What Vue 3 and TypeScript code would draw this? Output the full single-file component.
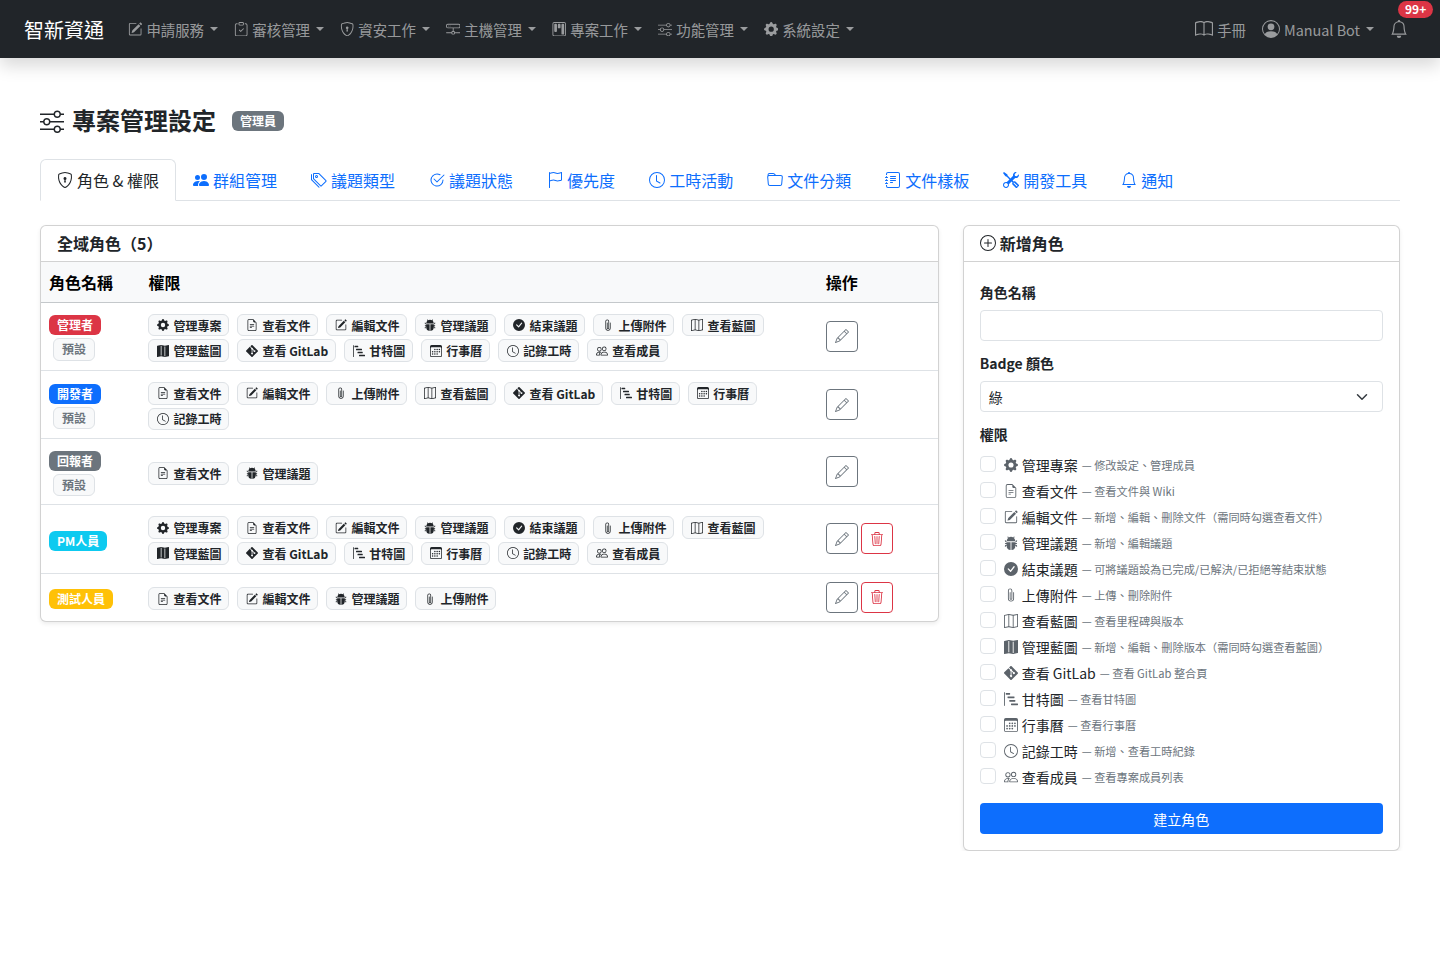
<script setup lang="ts">
import { h } from 'vue';

const paths: Record<string, string[]> = {
  pencilSquare: ['M15.502 1.94a.5.5 0 0 1 0 .706L14.459 3.69l-2-2L13.502.646a.5.5 0 0 1 .707 0l1.293 1.293zm-1.75 2.456-2-2L4.939 9.21a.5.5 0 0 0-.121.196l-.805 2.414a.25.25 0 0 0 .316.316l2.414-.805a.5.5 0 0 0 .196-.12l6.813-6.814z', 'M1 13.5A1.5 1.5 0 0 0 2.5 15h11a1.5 1.5 0 0 0 1.5-1.5v-6a.5.5 0 0 0-1 0v6a.5.5 0 0 1-.5.5h-11a.5.5 0 0 1-.5-.5v-11a.5.5 0 0 1 .5-.5H9a.5.5 0 0 0 0-1H2.5A1.5 1.5 0 0 0 1 2.5v11z'],
  clipboardCheck: ['M10.854 7.146a.5.5 0 0 1 0 .708l-3 3a.5.5 0 0 1-.708 0l-1.5-1.5a.5.5 0 1 1 .708-.708L7.5 9.793l2.646-2.647a.5.5 0 0 1 .708 0z', 'M4 1.5H3a2 2 0 0 0-2 2V14a2 2 0 0 0 2 2h10a2 2 0 0 0 2-2V3.5a2 2 0 0 0-2-2h-1v1h1a1 1 0 0 1 1 1V14a1 1 0 0 1-1 1H3a1 1 0 0 1-1-1V3.5a1 1 0 0 1 1-1h1v-1z', 'M9.5 1a.5.5 0 0 1 .5.5v1a.5.5 0 0 1-.5.5h-3a.5.5 0 0 1-.5-.5v-1a.5.5 0 0 1 .5-.5h3zm-3-1A1.5 1.5 0 0 0 5 1.5v1A1.5 1.5 0 0 0 6.5 4h3A1.5 1.5 0 0 0 11 2.5v-1A1.5 1.5 0 0 0 9.5 0h-3z'],
  shieldLock: ['M5.338 1.59a61.44 61.44 0 0 0-2.837.856.481.481 0 0 0-.328.39c-.554 4.157.726 7.19 2.253 9.188a10.725 10.725 0 0 0 2.287 2.233c.346.244.652.42.893.533.12.057.218.095.293.118a.55.55 0 0 0 .101.025.615.615 0 0 0 .1-.025c.076-.023.174-.061.294-.118.24-.113.547-.29.893-.533a10.726 10.726 0 0 0 2.287-2.233c1.527-1.997 2.807-5.031 2.253-9.188a.48.48 0 0 0-.328-.39c-.651-.213-1.75-.56-2.837-.855C9.552 1.29 8.531 1.067 8 1.067c-.53 0-1.552.223-2.662.524zM5.072.56C6.157.265 7.31 0 8 0s1.843.265 2.928.56c1.11.3 2.229.655 2.887.87a1.54 1.54 0 0 1 1.044 1.262c.596 4.477-.787 7.795-2.465 9.99a11.775 11.775 0 0 1-2.517 2.453 7.159 7.159 0 0 1-1.048.625c-.28.132-.581.24-.829.24s-.548-.108-.829-.24a7.158 7.158 0 0 1-1.048-.625 11.777 11.777 0 0 1-2.517-2.453C1.928 10.487.545 7.169 1.141 2.692A1.54 1.54 0 0 1 2.185 1.43 62.456 62.456 0 0 1 5.072.56z', 'M9.5 6.5a1.5 1.5 0 0 1-1 1.415l.385 1.99a.5.5 0 0 1-.491.595h-.788a.5.5 0 0 1-.49-.595l.384-1.99a1.5 1.5 0 1 1 2-1.415z'],
  hddNetwork: ['M4.5 5a.5.5 0 1 0 0-1 .5.5 0 0 0 0 1zM3 4.5a.5.5 0 1 1-1 0 .5.5 0 0 1 1 0z', 'M0 4a2 2 0 0 1 2-2h12a2 2 0 0 1 2 2v1a2 2 0 0 1-2 2H8.5v3a1.5 1.5 0 0 1 1.5 1.5h5.5a.5.5 0 0 1 0 1H10A1.5 1.5 0 0 1 8.5 14h-1A1.5 1.5 0 0 1 6 12.5H.5a.5.5 0 0 1 0-1H6A1.5 1.5 0 0 1 7.5 10V7H2a2 2 0 0 1-2-2V4zm1 0v1a1 1 0 0 0 1 1h12a1 1 0 0 0 1-1V4a1 1 0 0 0-1-1H2a1 1 0 0 0-1 1zm6 7.5v1a.5.5 0 0 0 .5.5h1a.5.5 0 0 0 .5-.5v-1a.5.5 0 0 0-.5-.5h-1a.5.5 0 0 0-.5.5z'],
  kanban: ['M13.5 1a1 1 0 0 1 1 1v12a1 1 0 0 1-1 1h-11a1 1 0 0 1-1-1V2a1 1 0 0 1 1-1h11zm-11-1a2 2 0 0 0-2 2v12a2 2 0 0 0 2 2h11a2 2 0 0 0 2-2V2a2 2 0 0 0-2-2h-11z', 'M6.5 3a1 1 0 0 1 1-1h1a1 1 0 0 1 1 1v3a1 1 0 0 1-1 1h-1a1 1 0 0 1-1-1V3zm-4 0a1 1 0 0 1 1-1h1a1 1 0 0 1 1 1v7a1 1 0 0 1-1 1h-1a1 1 0 0 1-1-1V3zm8 0a1 1 0 0 1 1-1h1a1 1 0 0 1 1 1v10a1 1 0 0 1-1 1h-1a1 1 0 0 1-1-1V3z'],
  sliders: ['M11.5 2a1.5 1.5 0 1 0 0 3 1.5 1.5 0 0 0 0-3zM9.05 3a2.5 2.5 0 0 1 4.9 0H16v1h-2.05a2.5 2.5 0 0 1-4.9 0H0V3h9.05zM4.5 7a1.5 1.5 0 1 0 0 3 1.5 1.5 0 0 0 0-3zM2.05 8a2.5 2.5 0 0 1 4.9 0H16v1H6.95a2.5 2.5 0 0 1-4.9 0H0V8h2.05zm9.45 4a1.5 1.5 0 1 0 0 3 1.5 1.5 0 0 0 0-3zm-2.45 1a2.5 2.5 0 0 1 4.9 0H16v1h-2.05a2.5 2.5 0 0 1-4.9 0H0v-1h9.05z'],
  gearFill: ['M9.405 1.05c-.413-1.4-2.397-1.4-2.81 0l-.1.34a1.464 1.464 0 0 1-2.105.872l-.31-.17c-1.283-.698-2.686.705-1.987 1.987l.169.311c.446.82.023 1.841-.872 2.105l-.34.1c-1.4.413-1.4 2.397 0 2.81l.34.1a1.464 1.464 0 0 1 .872 2.105l-.17.31c-.698 1.283.705 2.686 1.987 1.987l.311-.169a1.464 1.464 0 0 1 2.105.872l.1.34c.413 1.4 2.397 1.4 2.81 0l.1-.34a1.464 1.464 0 0 1 2.105-.872l.31.17c1.283.698 2.686-.705 1.987-1.987l-.169-.311a1.464 1.464 0 0 1 .872-2.105l.34-.1c1.4-.413 1.4-2.397 0-2.81l-.34-.1a1.464 1.464 0 0 1-.872-2.105l.17-.31c.698-1.283-.705-2.686-1.987-1.987l-.311.169a1.464 1.464 0 0 1-2.105-.872l-.1-.34zM8 10.93a2.929 2.929 0 1 1 0-5.86 2.929 2.929 0 0 1 0 5.858z'],
  book: ['M1 2.828c.885-.37 2.154-.769 3.388-.893 1.33-.134 2.458.063 3.112.752v9.746c-.935-.53-2.12-.603-3.213-.493-1.18.12-2.37.461-3.287.811V2.828zm7.5-.141c.654-.689 1.782-.886 3.112-.752 1.234.124 2.503.523 3.388.893v9.923c-.918-.35-2.107-.692-3.287-.81-1.094-.111-2.278-.039-3.213.492V2.687zM8 1.783C7.015.936 5.587.81 4.287.94c-1.514.153-3.042.672-3.994 1.105A.5.5 0 0 0 0 2.5v11a.5.5 0 0 0 .707.455c.882-.4 2.303-.881 3.68-1.02 1.409-.142 2.59.087 3.223.877a.5.5 0 0 0 .78 0c.633-.79 1.814-1.019 3.222-.877 1.378.139 2.8.62 3.681 1.02A.5.5 0 0 0 16 13.5v-11a.5.5 0 0 0-.293-.455c-.952-.433-2.48-.952-3.994-1.105C10.413.809 8.985.936 8 1.783z'],
  personCircle: ['M11 6a3 3 0 1 1-6 0 3 3 0 0 1 6 0z', 'M0 8a8 8 0 1 1 16 0A8 8 0 0 1 0 8zm8-7a7 7 0 0 0-5.468 11.37C3.242 11.226 4.805 10 8 10s4.757 1.225 5.468 2.37A7 7 0 0 0 8 1z'],
  bell: ['M8 16a2 2 0 0 0 2-2H6a2 2 0 0 0 2 2zM8 1.918l-.797.161A4.002 4.002 0 0 0 4 6c0 .628-.134 2.197-.459 3.742-.16.767-.376 1.566-.663 2.258h10.244c-.287-.692-.502-1.49-.663-2.258C12.134 8.197 12 6.628 12 6a4.002 4.002 0 0 0-3.203-3.92L8 1.917zM14.22 12c.223.447.481.801.78 1H1c.299-.199.557-.553.78-1C2.68 10.2 3 6.88 3 6c0-2.42 1.72-4.44 4.005-4.901a1 1 0 1 1 1.99 0A5.002 5.002 0 0 1 13 6c0 .88.32 4.2 1.22 6z'],
  peopleFill: ['M7 14s-1 0-1-1 1-4 5-4 5 3 5 4-1 1-1 1H7Zm4-6a3 3 0 1 0 0-6 3 3 0 0 0 0 6Zm-5.784 6A2.238 2.238 0 0 1 5 13c0-1.355.68-2.75 1.936-3.72A6.325 6.325 0 0 0 5 9c-4 0-5 3-5 4s1 1 1 1h4.216ZM4.5 8a2.5 2.5 0 1 0 0-5 2.5 2.5 0 0 0 0 5Z'],
  tags: ['M3 2v4.586l7 7L14.586 9l-7-7H3zM2 2a1 1 0 0 1 1-1h4.586a1 1 0 0 1 .707.293l7 7a1 1 0 0 1 0 1.414l-4.586 4.586a1 1 0 0 1-1.414 0l-7-7A1 1 0 0 1 2 6.586V2z', 'M5.5 5a.5.5 0 1 1 0-1 .5.5 0 0 1 0 1zm0 1a1.5 1.5 0 1 0 0-3 1.5 1.5 0 0 0 0 3zM1 7.086a1 1 0 0 0 .293.707L8.75 15.25l-.043.043a1 1 0 0 1-1.414 0l-7-7A1 1 0 0 1 0 7.586V3a1 1 0 0 1 1-1v5.086z'],
  check2Circle: ['M2.5 8a5.5 5.5 0 0 1 8.25-4.764.5.5 0 0 0 .5-.866A6.5 6.5 0 1 0 14.5 8a.5.5 0 0 0-1 0 5.5 5.5 0 1 1-11 0z', 'M15.354 3.354a.5.5 0 0 0-.708-.708L8 9.293 5.354 6.646a.5.5 0 1 0-.708.708l3 3a.5.5 0 0 0 .708 0l7-7z'],
  flag: ['M14.778.085A.5.5 0 0 1 15 .5V8a.5.5 0 0 1-.314.464L14.5 8l.186.464-.003.001-.006.003-.023.009a12.435 12.435 0 0 1-.397.15c-.264.095-.631.223-1.047.35-.816.252-1.879.523-2.71.523-.847 0-1.548-.28-2.158-.525l-.028-.01C7.68 8.71 7.14 8.5 6.5 8.5c-.7 0-1.638.23-2.437.477A19.626 19.626 0 0 0 3 9.342V15.5a.5.5 0 0 1-1 0V.5a.5.5 0 0 1 1 0v.282c.226-.079.496-.17.79-.26C4.606.272 5.67 0 6.5 0c.84 0 1.524.277 2.121.519l.043.018C9.286.788 9.828 1 10.5 1c.7 0 1.638-.23 2.437-.477a19.587 19.587 0 0 0 1.349-.476l.019-.007.004-.002h.001M14 1.221c-.22.078-.48.167-.766.255-.81.252-1.872.523-2.734.523-.886 0-1.592-.286-2.203-.534l-.008-.003C7.662 1.21 7.139 1 6.5 1c-.669 0-1.606.229-2.415.478A21.294 21.294 0 0 0 3 1.845v6.433c.22-.078.48-.167.766-.255C4.576 7.77 5.638 7.5 6.5 7.5c.847 0 1.548.28 2.158.525l.028.01C9.32 8.29 9.86 8.5 10.5 8.5c.668 0 1.606-.229 2.415-.478A21.317 21.317 0 0 0 14 7.655V1.222z'],
  clock: ['M8 3.5a.5.5 0 0 0-1 0V9a.5.5 0 0 0 .252.434l3.5 2a.5.5 0 0 0 .496-.868L8 8.71V3.5z', 'M8 16A8 8 0 1 0 8 0a8 8 0 0 0 0 16zm7-8A7 7 0 1 1 1 8a7 7 0 0 1 14 0z'],
  folder: ['M.54 3.87.5 3a2 2 0 0 1 2-2h3.672a2 2 0 0 1 1.414.586l.828.828A2 2 0 0 0 9.828 3h3.982a2 2 0 0 1 1.992 2.181l-.637 7A2 2 0 0 1 13.174 14H2.826a2 2 0 0 1-1.991-1.819l-.637-7a1.99 1.99 0 0 1 .342-1.31zM2.19 4a1 1 0 0 0-.996 1.09l.637 7a1 1 0 0 0 .995.91h10.348a1 1 0 0 0 .995-.91l.637-7A1 1 0 0 0 13.81 4H2.19zm4.69-1.707A1 1 0 0 0 6.172 2H2.5a1 1 0 0 0-1 .981l.006.139C1.72 3.042 1.95 3 2.19 3h5.396l-.707-.707z'],
  journalText: ['M5 10.5a.5.5 0 0 1 .5-.5h2a.5.5 0 0 1 0 1h-2a.5.5 0 0 1-.5-.5zm0-2a.5.5 0 0 1 .5-.5h5a.5.5 0 0 1 0 1h-5a.5.5 0 0 1-.5-.5zm0-2a.5.5 0 0 1 .5-.5h5a.5.5 0 0 1 0 1h-5a.5.5 0 0 1-.5-.5zm0-2a.5.5 0 0 1 .5-.5h5a.5.5 0 0 1 0 1h-5a.5.5 0 0 1-.5-.5z', 'M3 0h10a2 2 0 0 1 2 2v12a2 2 0 0 1-2 2H3a2 2 0 0 1-2-2v-1h1v1a1 1 0 0 0 1 1h10a1 1 0 0 0 1-1V2a1 1 0 0 0-1-1H3a1 1 0 0 0-1 1v1H1V2a2 2 0 0 1 2-2z', 'M1 5v-.5a.5.5 0 0 1 1 0V5h.5a.5.5 0 0 1 0 1h-2a.5.5 0 0 1 0-1H1zm0 3v-.5a.5.5 0 0 1 1 0V8h.5a.5.5 0 0 1 0 1h-2a.5.5 0 0 1 0-1H1zm0 3v-.5a.5.5 0 0 1 1 0v.5h.5a.5.5 0 0 1 0 1h-2a.5.5 0 0 1 0-1H1z'],
  tools: ['M1 0 0 1l2.2 3.081a1 1 0 0 0 .815.419h.07a1 1 0 0 1 .708.293l2.675 2.675-2.617 2.654A3.003 3.003 0 0 0 0 13a3 3 0 1 0 5.878-.851l2.654-2.617.968.968-.305.914a1 1 0 0 0 .242 1.023l3.27 3.27a.997.997 0 0 0 1.414 0l1.586-1.586a.997.997 0 0 0 0-1.414l-3.27-3.27a1 1 0 0 0-1.023-.242L10.5 9.5l-.96-.96 2.68-2.643A3.005 3.005 0 0 0 16 3c0-.269-.035-.53-.102-.777l-2.14 2.141L12 4l-.364-1.757L13.777.102a3 3 0 0 0-3.675 3.68L7.462 6.46 4.793 3.793a1 1 0 0 1-.293-.707v-.071a1 1 0 0 0-.419-.814L1 0Zm9.646 10.646a.5.5 0 0 1 .708 0l2.914 2.915a.5.5 0 0 1-.707.707l-2.915-2.914a.5.5 0 0 1 0-.708ZM3 11l.471.242.529.026.287.445.445.287.026.529L5 13l-.242.471-.026.529-.445.287-.287.445-.529.026L3 15l-.471-.242L2 14.732l-.287-.445L1.268 14l-.026-.529L1 13l.242-.471.026-.529.445-.287.287-.445.529-.026L3 11Z'],
  plusCircle: ['M8 15A7 7 0 1 1 8 1a7 7 0 0 1 0 14zm0 1A8 8 0 1 0 8 0a8 8 0 0 0 0 16z', 'M8 4a.5.5 0 0 1 .5.5v3h3a.5.5 0 0 1 0 1h-3v3a.5.5 0 0 1-1 0v-3h-3a.5.5 0 0 1 0-1h3v-3A.5.5 0 0 1 8 4z'],
  fileText: ['M5.5 7a.5.5 0 0 0 0 1h5a.5.5 0 0 0 0-1h-5zM5 9.5a.5.5 0 0 1 .5-.5h5a.5.5 0 0 1 0 1h-5a.5.5 0 0 1-.5-.5zm0 2a.5.5 0 0 1 .5-.5h2a.5.5 0 0 1 0 1h-2a.5.5 0 0 1-.5-.5z', 'M9.5 0H4a2 2 0 0 0-2 2v12a2 2 0 0 0 2 2h8a2 2 0 0 0 2-2V4.5L9.5 0zm0 1v2A1.5 1.5 0 0 0 11 4.5h2V14a1 1 0 0 1-1 1H4a1 1 0 0 1-1-1V2a1 1 0 0 1 1-1h5.5z'],
  bugFill: ['M4.978.855a.5.5 0 1 0-.956.29l.41 1.352A4.985 4.985 0 0 0 3 6h10a4.985 4.985 0 0 0-1.432-3.503l.41-1.352a.5.5 0 1 0-.956-.29l-.291.956A4.978 4.978 0 0 0 8 1a4.979 4.979 0 0 0-2.731.811l-.29-.956z', 'M13 6v1H8.5v8.975A5 5 0 0 0 13 11h.5a.5.5 0 0 1 .5.5v.5a.5.5 0 1 0 1 0v-.5a1.5 1.5 0 0 0-1.5-1.5H13V9h1.5a.5.5 0 0 0 0-1H13V7h.5A1.5 1.5 0 0 0 15 5.5V5a.5.5 0 0 0-1 0v.5a.5.5 0 0 1-.5.5H13zm-5.5 9.975V7H3V6h-.5a.5.5 0 0 1-.5-.5V5a.5.5 0 0 0-1 0v.5A1.5 1.5 0 0 0 2.5 7H3v1H1.5a.5.5 0 0 0 0 1H3v1h-.5A1.5 1.5 0 0 0 1 11.5v.5a.5.5 0 1 0 1 0v-.5a.5.5 0 0 1 .5-.5H3a5 5 0 0 0 4.5 4.975z'],
  checkCircleFill: ['M16 8A8 8 0 1 1 0 8a8 8 0 0 1 16 0zm-3.97-3.03a.75.75 0 0 0-1.08.022L7.477 9.417 5.384 7.323a.75.75 0 0 0-1.06 1.06L6.97 11.03a.75.75 0 0 0 1.079-.02l3.992-4.99a.75.75 0 0 0-.01-1.05z'],
  paperclip: ['M4.5 3a2.5 2.5 0 0 1 5 0v9a1.5 1.5 0 0 1-3 0V5a.5.5 0 0 1 1 0v7a.5.5 0 0 0 1 0V3a1.5 1.5 0 1 0-3 0v9a2.5 2.5 0 0 0 5 0V5a.5.5 0 0 1 1 0v7a3.5 3.5 0 1 1-7 0V3z'],
  map: ['M15.817.113A.5.5 0 0 1 16 .5v14a.5.5 0 0 1-.402.49l-5 1a.502.502 0 0 1-.196 0L5.5 15.01l-4.902.98A.5.5 0 0 1 0 15.5v-14a.5.5 0 0 1 .402-.49l5-1a.5.5 0 0 1 .196 0L10.5.99l4.902-.98a.5.5 0 0 1 .415.103zM10 1.91l-4-.8v12.98l4 .8V1.91zm1 12.98 4-.8V1.11l-4 .8v12.98zm-6-.8V1.11l-4 .8v12.98l4-.8z'],
  mapFill: ['M16 .5a.5.5 0 0 0-.598-.49L10.5.99 5.598.01a.5.5 0 0 0-.196 0l-5 1A.5.5 0 0 0 0 1.5v14a.5.5 0 0 0 .598.49l4.902-.98 4.902.98a.502.502 0 0 0 .196 0l5-1A.5.5 0 0 0 16 14.5V.5zM5 14.09V1.11l.5-.1.5.1v12.98l-.402-.08a.498.498 0 0 0-.196 0L5 14.09zm5 .8V1.91l.402.08a.5.5 0 0 0 .196 0L11 1.91v12.98l-.5.1-.5-.1z'],
  git: ['M15.698 7.287 8.712.302a1.03 1.03 0 0 0-1.457 0l-1.45 1.45 1.84 1.84a1.223 1.223 0 0 1 1.55 1.56l1.773 1.774a1.224 1.224 0 0 1 1.267 2.025 1.226 1.226 0 0 1-2.002-1.334L8.58 5.963v4.353a1.226 1.226 0 1 1-1.008-.036V5.887a1.226 1.226 0 0 1-.666-1.608L5.093 2.465l-4.79 4.79a1.03 1.03 0 0 0 0 1.457l6.986 6.986a1.03 1.03 0 0 0 1.457 0l6.953-6.953a1.031 1.031 0 0 0 0-1.457'],
  barChartSteps: ['M.5 0a.5.5 0 0 1 .5.5v15a.5.5 0 0 1-1 0V.5A.5.5 0 0 1 .5 0zM2 1.5a.5.5 0 0 1 .5-.5h4a.5.5 0 0 1 .5.5v1a.5.5 0 0 1-.5.5h-4a.5.5 0 0 1-.5-.5v-1zm2 4a.5.5 0 0 1 .5-.5h7a.5.5 0 0 1 .5.5v1a.5.5 0 0 1-.5.5h-7a.5.5 0 0 1-.5-.5v-1zm2 4a.5.5 0 0 1 .5-.5h6a.5.5 0 0 1 .5.5v1a.5.5 0 0 1-.5.5h-6a.5.5 0 0 1-.5-.5v-1zm2 4a.5.5 0 0 1 .5-.5h7a.5.5 0 0 1 .5.5v1a.5.5 0 0 1-.5.5h-7a.5.5 0 0 1-.5-.5v-1z'],
  calendar3: ['M14 0H2a2 2 0 0 0-2 2v12a2 2 0 0 0 2 2h12a2 2 0 0 0 2-2V2a2 2 0 0 0-2-2zM1 3.857C1 3.384 1.448 3 2 3h12c.552 0 1 .384 1 .857v10.286c0 .473-.448.857-1 .857H2c-.552 0-1-.384-1-.857V3.857z', 'M6.5 7a1 1 0 1 0 0-2 1 1 0 0 0 0 2zm3 0a1 1 0 1 0 0-2 1 1 0 0 0 0 2zm3 0a1 1 0 1 0 0-2 1 1 0 0 0 0 2zm-9 3a1 1 0 1 0 0-2 1 1 0 0 0 0 2zm3 0a1 1 0 1 0 0-2 1 1 0 0 0 0 2zm3 0a1 1 0 1 0 0-2 1 1 0 0 0 0 2zm3 0a1 1 0 1 0 0-2 1 1 0 0 0 0 2zm-9 3a1 1 0 1 0 0-2 1 1 0 0 0 0 2zm3 0a1 1 0 1 0 0-2 1 1 0 0 0 0 2zm3 0a1 1 0 1 0 0-2 1 1 0 0 0 0 2z'],
  people: ['M15 14s1 0 1-1-1-4-5-4-5 3-5 4 1 1 1 1h8Zm-7.978-1A.261.261 0 0 1 7 12.996c.001-.264.167-1.03.76-1.72C8.312 10.629 9.282 10 11 10c1.717 0 2.687.63 3.24 1.276.593.69.758 1.457.76 1.72l-.008.002a.274.274 0 0 1-.014.002H7.022ZM11 7a2 2 0 1 0 0-4 2 2 0 0 0 0 4Zm3-2a3 3 0 1 1-6 0 3 3 0 0 1 6 0ZM6.936 9.28a5.88 5.88 0 0 0-1.23-.247A7.35 7.35 0 0 0 5 9c-4 0-5 3-5 4 0 .667.333 1 1 1h4.216A2.238 2.238 0 0 1 5 13c0-1.01.377-2.042 1.09-2.904.243-.294.526-.569.846-.816ZM4.92 10A5.493 5.493 0 0 0 4 13H1c0-.26.164-1.03.76-1.724.545-.636 1.492-1.256 3.16-1.275ZM1.5 5.5a3 3 0 1 1 6 0 3 3 0 0 1-6 0Zm3-2a2 2 0 1 0 0 4 2 2 0 0 0 0-4Z'],
  pencil: ['M12.146.146a.5.5 0 0 1 .708 0l3 3a.5.5 0 0 1 0 .708l-10 10a.5.5 0 0 1-.168.11l-5 2a.5.5 0 0 1-.65-.65l2-5a.5.5 0 0 1 .11-.168l10-10zM11.207 2.5 13.5 4.793 14.793 3.5 12.5 1.207 11.207 2.5zm1.586 3L10.5 3.207 4 9.707V10h.5a.5.5 0 0 1 .5.5v.5h.5a.5.5 0 0 1 .5.5v.5h.293l6.5-6.5zm-9.761 5.175-.106.106-1.528 3.821 3.821-1.528.106-.106A.5.5 0 0 1 5 12.5V12h-.5a.5.5 0 0 1-.5-.5V11h-.5a.5.5 0 0 1-.468-.325z'],
  trash3: ['M6.5 1h3a.5.5 0 0 1 .5.5v1H6v-1a.5.5 0 0 1 .5-.5ZM11 2.5v-1A1.5 1.5 0 0 0 9.5 0h-3A1.5 1.5 0 0 0 5 1.5v1H2.506a.58.58 0 0 0-.01 0H1.5a.5.5 0 0 0 0 1h.538l.853 10.66A2 2 0 0 0 4.885 16h6.23a2 2 0 0 0 1.994-1.84l.853-10.66h.538a.5.5 0 0 0 0-1h-.995a.59.59 0 0 0-.01 0H11Zm1.958 1-.846 10.58a1 1 0 0 1-.997.92h-6.23a1 1 0 0 1-.997-.92L3.042 3.5h9.916Zm-7.487 1a.5.5 0 0 1 .528.47l.5 8.5a.5.5 0 0 1-.998.06L5 5.03a.5.5 0 0 1 .47-.53Zm5.058 0a.5.5 0 0 1 .47.53l-.5 8.5a.5.5 0 1 1-.998-.06l.5-8.5a.5.5 0 0 1 .528-.47ZM8 4.5a.5.5 0 0 1 .5.5v8.5a.5.5 0 0 1-1 0V5a.5.5 0 0 1 .5-.5Z'],
};

const evenOdd = new Set(['sliders', 'map', 'mapFill', 'personCircle']);

function Icon(props: { name: string; size?: number }) {
  const s = props.size ?? 16;
  return h('svg', { class: 'bi', width: s, height: s, viewBox: '0 0 16 16', fill: 'currentColor' },
    paths[props.name].map(d => h('path', { d, 'fill-rule': evenOdd.has(props.name) ? 'evenodd' : 'nonzero' })));
}
Icon.props = ['name', 'size'];

const navItems = [
  { icon: 'pencilSquare', label: '申請服務' },
  { icon: 'clipboardCheck', label: '審核管理' },
  { icon: 'shieldLock', label: '資安工作' },
  { icon: 'hddNetwork', label: '主機管理' },
  { icon: 'kanban', label: '專案工作' },
  { icon: 'sliders', label: '功能管理' },
  { icon: 'gearFill', label: '系統設定' },
];

const tabs = [
  { icon: 'shieldLock', label: '角色 & 權限', active: true },
  { icon: 'peopleFill', label: '群組管理' },
  { icon: 'tags', label: '議題類型' },
  { icon: 'check2Circle', label: '議題狀態' },
  { icon: 'flag', label: '優先度' },
  { icon: 'clock', label: '工時活動' },
  { icon: 'folder', label: '文件分類' },
  { icon: 'journalText', label: '文件樣板' },
  { icon: 'tools', label: '開發工具' },
  { icon: 'bell', label: '通知' },
];

const perms: Record<string, { icon: string; label: string; desc: string }> = {
  manage: { icon: 'gearFill', label: '管理專案', desc: '修改設定、管理成員' },
  view: { icon: 'fileText', label: '查看文件', desc: '查看文件與 Wiki' },
  edit: { icon: 'pencilSquare', label: '編輯文件', desc: '新增、編輯、刪除文件（需同時勾選查看文件）' },
  issue: { icon: 'bugFill', label: '管理議題', desc: '新增、編輯議題' },
  close: { icon: 'checkCircleFill', label: '結束議題', desc: '可將議題設為已完成/已解決/已拒絕等結束狀態' },
  upload: { icon: 'paperclip', label: '上傳附件', desc: '上傳、刪除附件' },
  roadmap: { icon: 'map', label: '查看藍圖', desc: '查看里程碑與版本' },
  roadmapEdit: { icon: 'mapFill', label: '管理藍圖', desc: '新增、編輯、刪除版本（需同時勾選查看藍圖）' },
  git: { icon: 'git', label: '查看 GitLab', desc: '查看 GitLab 整合頁' },
  gantt: { icon: 'barChartSteps', label: '甘特圖', desc: '查看甘特圖' },
  calendar: { icon: 'calendar3', label: '行事曆', desc: '查看行事曆' },
  time: { icon: 'clock', label: '記錄工時', desc: '新增、查看工時紀錄' },
  members: { icon: 'people', label: '查看成員', desc: '查看專案成員列表' },
};
const permList = Object.values(perms);
const allPerms = Object.keys(perms);

const roles = [
  { name: '管理者', color: 'red', preset: true, perms: allPerms, del: false },
  { name: '開發者', color: 'blue', preset: true, perms: ['view', 'edit', 'upload', 'roadmap', 'git', 'gantt', 'calendar', 'time'], del: false },
  { name: '回報者', color: 'gray', preset: true, perms: ['view', 'issue'], del: false },
  { name: 'PM人員', color: 'cyan', preset: false, perms: allPerms, del: true },
  { name: '測試人員', color: 'yellow', preset: false, perms: ['view', 'edit', 'issue', 'upload'], del: true },
];
</script>

<template>
  <nav class="navbar">
    <span class="brand">智新資通</span>
    <ul class="nav-list">
      <li v-for="item in navItems" :key="item.label" class="nav-link">
        <Icon :name="item.icon" :size="14.4" />
        <span>{{ item.label }}</span>
        <i class="caret"></i>
      </li>
    </ul>
    <div class="nav-right">
      <span class="nav-link"><Icon name="book" :size="18" /><span>手冊</span></span>
      <span class="nav-link user"><Icon name="personCircle" :size="18" /><span>Manual Bot</span><i class="caret"></i></span>
      <span class="nav-link bell">
        <Icon name="bell" :size="18" />
        <b class="count">99+</b>
      </span>
    </div>
  </nav>

  <main class="page">
    <header class="title-row">
      <Icon name="sliders" :size="24" />
      <h1>專案管理設定</h1>
      <span class="title-badge">管理員</span>
    </header>

    <ul class="tabs">
      <li v-for="t in tabs" :key="t.label" class="tab" :class="{ active: t.active }">
        <Icon :name="t.icon" />
        <span>{{ t.label }}</span>
      </li>
    </ul>

    <div class="columns">
      <section class="card">
        <div class="card-head">全域角色（5）</div>
        <table class="roles">
          <colgroup><col class="c1" /><col class="c2" /><col class="c3" /></colgroup>
          <thead>
            <tr><th>角色名稱</th><th>權限</th><th>操作</th></tr>
          </thead>
          <tbody>
            <tr v-for="r in roles" :key="r.name">
              <td>
                <div class="role-cell">
                  <span class="role-badge" :class="r.color">{{ r.name }}</span>
                  <span v-if="r.preset" class="preset">預設</span>
                </div>
              </td>
              <td>
                <div class="chips">
                  <span v-for="p in r.perms" :key="p" class="chip">
                    <Icon :name="perms[p].icon" :size="12" />
                    <span>{{ perms[p].label }}</span>
                  </span>
                </div>
              </td>
              <td>
                <div class="actions">
                  <button class="btn-icon edit"><Icon name="pencil" :size="14" /></button>
                  <button v-if="r.del" class="btn-icon del"><Icon name="trash3" :size="14" /></button>
                </div>
              </td>
            </tr>
          </tbody>
        </table>
      </section>

      <section class="card">
        <div class="card-head with-icon"><Icon name="plusCircle" /><span>新增角色</span></div>
        <form class="form" @submit.prevent>
          <label class="field-label">角色名稱</label>
          <input class="control" type="text" />
          <label class="field-label">Badge 顏色</label>
          <div class="control select">
            <span>綠</span>
            <svg width="16" height="16" viewBox="0 0 16 16"><path fill="none" stroke="#343a40" stroke-linecap="round" stroke-linejoin="round" stroke-width="2" d="m2 5 6 6 6-6" /></svg>
          </div>
          <label class="field-label">權限</label>
          <div class="perm-list">
            <div v-for="p in permList" :key="p.label" class="perm">
              <span class="check"></span>
              <Icon :name="p.icon" :size="14" />
              <span class="perm-label">{{ p.label }}</span>
              <span class="perm-desc">— {{ p.desc }}</span>
            </div>
          </div>
          <button class="submit">建立角色</button>
        </form>
      </section>
    </div>
  </main>
</template>

<style>
body {
  background: #fff;
}
</style>

<style scoped>
* {
  box-sizing: border-box;
}

.navbar,
.page {
  font-family: "Noto Sans CJK TC", "Noto Sans", sans-serif;
  color: #212529;
}

.navbar {
  display: flex;
  align-items: center;
  height: 58px;
  padding: 0 24px;
  background: #212529;
  box-shadow: 0 8px 16px rgba(0, 0, 0, 0.15);
}

.brand {
  font-size: 20px;
  color: #fff;
  margin-right: 16px;
}

.nav-list {
  display: flex;
  list-style: none;
  margin: 0;
  padding: 0;
}

.nav-link {
  display: flex;
  align-items: center;
  gap: 4px;
  padding: 8px;
  font-size: 14.4px;
  color: rgba(255, 255, 255, 0.55);
}

.caret {
  width: 0;
  height: 0;
  margin-left: 2px;
  border-top: 4.32px solid;
  border-left: 4.32px solid transparent;
  border-right: 4.32px solid transparent;
}

.nav-right {
  display: flex;
  align-items: center;
  margin-left: auto;
}

.bell {
  position: relative;
}

.count {
  position: absolute;
  left: 16px;
  top: -11px;
  padding: 0 7px;
  height: 17px;
  line-height: 16px;
  border-radius: 9px;
  background: #dc3545;
  color: #fff;
  font-size: 12px;
}

.page {
  padding: 48px 40px 0;
}

.title-row {
  display: flex;
  align-items: center;
  height: 30px;
}

.title-row .bi {
  margin-right: 8px;
}

h1 {
  margin: 0 16px 4px 0;
  font-size: 24px;
  font-weight: 700;
}

.title-badge {
  padding: 0 8px;
  height: 20px;
  line-height: 20px;
  border-radius: 6px;
  background: #6c757d;
  color: #fff;
  font-size: 12px;
  font-weight: 700;
}

.tabs {
  display: flex;
  list-style: none;
  margin: 23px 0 24px;
  padding: 0;
  border-bottom: 1px solid #dee2e6;
}

.tab {
  display: flex;
  align-items: center;
  gap: 4px;
  height: 42px;
  padding: 0 16px;
  margin-bottom: -1px;
  color: #0d6efd;
  font-size: 16px;
  border: 1px solid transparent;
  border-radius: 6px 6px 0 0;
}

.tab.active {
  color: #212529;
  background: #fff;
  border-color: #dee2e6 #dee2e6 #fff;
}

.columns {
  display: grid;
  grid-template-columns: 898.67fr 437.33fr;
  gap: 24px;
  align-items: start;
}

.card {
  border: 1px solid rgba(0, 0, 0, 0.175);
  border-radius: 6px;
  background: #fff;
  box-shadow: 0 2px 4px rgba(0, 0, 0, 0.075);
  overflow: hidden;
}

.card-head {
  padding: 0 16px 2px;
  height: 36px;
  line-height: 34px;
  font-size: 16px;
  font-weight: 600;
  border-bottom: 1px solid rgba(0, 0, 0, 0.175);
}

.with-icon {
  display: flex;
  align-items: center;
  gap: 4px;
}

.roles {
  width: 100%;
  table-layout: fixed;
  border-collapse: collapse;
}

.c1 { width: 99.4px; }
.c3 { width: 120px; }

th {
  height: 40.4px;
  padding: 0 8px;
  text-align: left;
  font-size: 16px;
  font-weight: 700;
  color: #000;
  background: #f8f9fa;
  border-bottom: 1px solid #c4c8cb;
}

td {
  padding: 8px;
  vertical-align: middle;
  border-bottom: 1px solid #dee2e6;
}

tbody tr:last-child td {
  border-bottom: 0;
}

.role-cell {
  display: flex;
  flex-direction: column;
  align-items: flex-start;
  gap: 3px;
  padding-top: 3.5px;
}

.role-badge {
  height: 20px;
  line-height: 20px;
  padding: 0 8px;
  border-radius: 6px;
  font-size: 12px;
  font-weight: 700;
  color: #fff;
}

.red { background: #dc3545; }
.blue { background: #0d6efd; }
.gray { background: #6c757d; }
.cyan { background: #0dcaf0; }
.yellow { background: #ffc107; }

.preset {
  margin-left: 4px;
  height: 22.6px;
  line-height: 20.6px;
  padding: 0 8px;
  border: 1px solid #dee2e6;
  border-radius: 6px;
  background: #f8f9fa;
  color: #6c757d;
  font-size: 12px;
  font-weight: 700;
}

.chips {
  display: flex;
  flex-wrap: wrap;
  column-gap: 8px;
}

.chip {
  display: inline-flex;
  align-items: center;
  gap: 4px;
  height: 22.6px;
  margin-top: 3px;
  padding: 0 7px 0 8px;
  border: 1px solid #dee2e6;
  border-radius: 6px;
  background: #f8f9fa;
  color: #212529;
  font-size: 12px;
  font-weight: 700;
}

.actions {
  display: flex;
  gap: 3px;
}

.btn-icon {
  display: flex;
  align-items: center;
  justify-content: center;
  width: 32px;
  height: 31px;
  padding: 0;
  background: #fff;
  border-radius: 4px;
  border: 1px solid #6c757d;
  color: #6c757d;
}

.btn-icon.del {
  border-color: #dc3545;
  color: #dc3545;
}

.form {
  padding: 19.5px 16px 16px;
}

.field-label {
  display: block;
  font-size: 14px;
  font-weight: 600;
  line-height: 21px;
  margin-bottom: 7.5px;
}

.control {
  display: block;
  width: 100%;
  height: 31px;
  margin-bottom: 11.5px;
  padding: 0 8px;
  border: 1px solid #dee2e6;
  border-radius: 4px;
  background: #fff;
  font-size: 14px;
  font-family: inherit;
}

.select {
  display: flex;
  align-items: center;
  justify-content: space-between;
}

.select svg {
  width: 12px;
  height: 12px;
  margin-right: 6px;
}

.perm-list {
  display: flex;
  flex-direction: column;
  margin-top: 1px;
}

.perm {
  display: flex;
  align-items: center;
  height: 26px;
  font-size: 14px;
}

.check {
  width: 16px;
  height: 16px;
  margin-right: 8px;
  margin-top: -3px;
  border: 1px solid #dee2e6;
  border-radius: 4px;
  background: #fff;
}

.perm .bi {
  color: #5c636a;
  margin-right: 4px;
}

.perm-desc {
  margin-left: 4px;
  font-size: 11.2px;
  color: #6c757d;
}

.submit {
  display: block;
  width: 100%;
  height: 31px;
  margin-top: 13px;
  border: 0;
  border-radius: 4px;
  background: #0d6efd;
  color: #fff;
  font-size: 14px;
  font-family: inherit;
}
</style>
